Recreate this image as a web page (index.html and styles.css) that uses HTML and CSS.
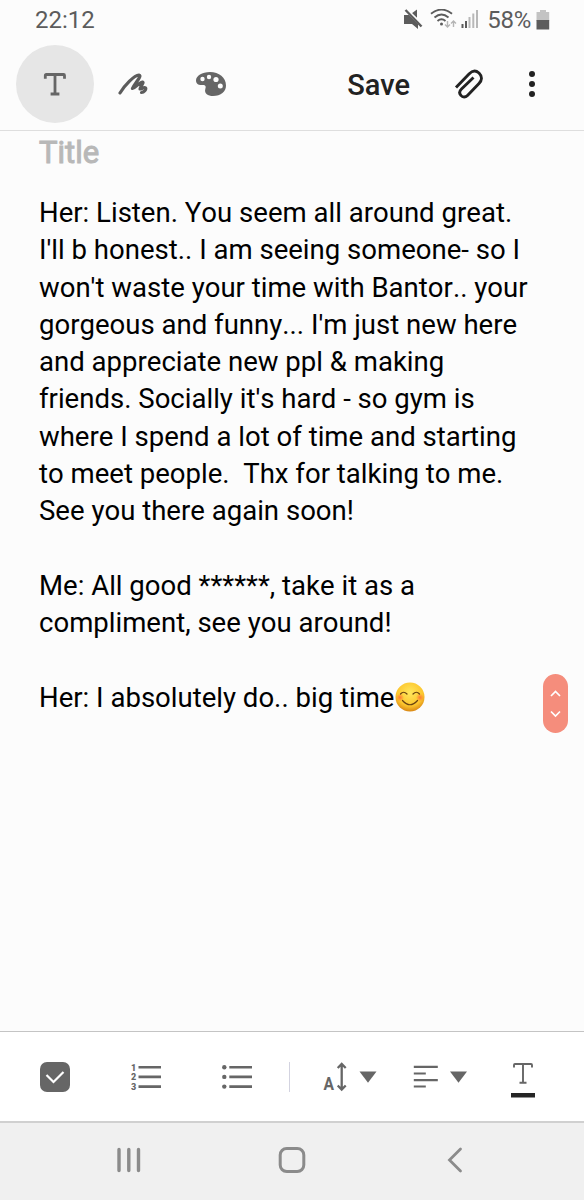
FILE: index.html
```html
<!DOCTYPE html>
<html lang="en">

<head>
 <meta charset="UTF-8">
 <meta name="viewport" content="width=device-width">
 <title>Note</title>
 <link rel="stylesheet" href="styles.css">
</head>

<body>

 <div class="status">
  <span class="clock">22:12</span>
  <svg class="signals" width="76" height="22" viewBox="0 0 76 22">
   <!-- Muted -->
   <path fill="#5c5c5c" d="M0 6h5l9 9v5l-6-5H0zM7.500 4.500L13 .500V9z"/>
   <path stroke="#fcfcfc" stroke-width="1.500" d="M3 0l16 16"/>
   <path stroke="#5c5c5c" stroke-width="2.400" d="M1.500 1L17.500 17.500"/>
   <!-- Wi-Fi -->
   <g fill="none" stroke="#5c5c5c" stroke-width="1.900">
    <path d="M27 4.700Q37.500 -3.500 48 4.700M30.500 8.500Q37.500 2.700 44.500 8.500M33.500 12Q37.500 8.700 41.500 12"/>
   </g>
   <circle cx="37.500" cy="15" r="1.500" fill="#5c5c5c"/>
   <path fill="none" stroke="#b5b5b5" stroke-width="1.400" d="M43.500 12v6M41 15.500l2.500 2.500 2.500-2.500M49.500 18v-6M47 14.500l2.500-2.500 2.500 2.500"/>
   <!-- Mobile signal -->
   <path stroke="#5c5c5c" stroke-width="2" d="M58.500 19v-4M62 19v-7"/>
   <path stroke="#b8b8b8" stroke-width="2" d="M65.500 19V8M69.300 19V4.500M73 19V1"/>
  </svg>
  <span class="percent">58%</span>
  <svg class="battery" width="14" height="20" viewBox="0 0 14 20">
   <path fill="#c3c3c3" d="M4 0h6v2h3.200v9H.500V2H4z"/>
   <path fill="#5c5c5c" d="M.500 10h12.700v9.500H.500z"/>
  </svg>
 </div>

 <header class="toolbar">
  <button class="tool active" type="button">
   <svg width="24" height="24" viewBox="0 0 24 24" fill="none" stroke="#666" stroke-width="2.800">
    <path d="M2.300 6.800V3.400q0-.900.900-.900h17.400q.900 0 .900.900v3.400M12 2.500v19M7.600 22h8.800"/>
   </svg>
  </button>
  <button class="tool" type="button">
   <svg width="30" height="24" viewBox="0 0 30 24" fill="none" stroke="#5c5c5c" stroke-width="3.200" stroke-linecap="round" stroke-linejoin="round">
    <path d="M2 21C7 13 16 3.500 21 3C24.500 3.500 17 11 14.500 16.500C16.500 17 20 11 24.500 10C26.500 10.500 22 15 22 17C24 17 26 14.500 27.500 16C28.500 17.500 26 20.500 23.500 20.500"/>
   </svg>
  </button>
  <button class="tool" type="button">
   <svg width="30" height="24" viewBox="0 0 30 24">
    <path fill="#666" d="M14 0C6 0 0 4 0 8.500C0 12 3 13.500 6.500 13C9 12.800 10.500 14 9.300 17C8 21.500 12 24 17 24C25 24 30 19.500 30 13.500C30 5.500 23 0 14 0z"/>
    <g fill="#fcfcfc">
     <circle cx="6.500" cy="7" r="2.200"/>
     <circle cx="13" cy="5" r="2.200"/>
     <circle cx="20" cy="7.500" r="2.600"/>
     <circle cx="24.300" cy="14" r="2.500"/>
    </g>
   </svg>
  </button>
  <button class="save" type="button">Save</button>
  <button class="attach" type="button">
   <svg width="30" height="30" viewBox="0 0 30 30" fill="none" stroke="#222" stroke-width="2.900">
    <path d="M2 18.500L15 5C18.500 1.300 22 1.300 25 4C28.500 7.500 28 11.500 25 14.500L13.500 26.500C11.500 28.500 8.500 28.500 7 26.500C5 24.500 5.500 22 7.500 20L19.500 8.500"/>
   </svg>
  </button>
  <button class="more" type="button">
   <svg width="8" height="28" viewBox="0 0 8 28" fill="#222">
    <circle cx="4" cy="4" r="3"/>
    <circle cx="4" cy="14" r="3"/>
    <circle cx="4" cy="24" r="3"/>
   </svg>
  </button>
 </header>

 <main class="note">
  <h1 class="title">Title</h1>
  <div class="text">
   <p>Her: Listen. You seem all around great.<br>
    I'll b honest.. I am seeing someone- so I<br>
    won't waste your time with Bantor.. your<br>
    gorgeous and funny... I'm just new here<br>
    and appreciate new ppl &amp; making<br>
    friends. Socially it's hard - so gym is<br>
    where I spend a lot of time and starting<br>
    to meet people.&nbsp; Thx for talking to me.<br>
    See you there again soon!</p>
   <p>Me: All good ******, take it as a<br>
    compliment, see you around!</p>
   <p>Her: I absolutely do.. big time<svg class="emoji" width="30" height="30" viewBox="0 0 30 30">
     <defs>
      <radialGradient id="face" cx=".5" cy=".35" r=".65">
       <stop offset="0" stop-color="#ffe75c"/>
       <stop offset=".7" stop-color="#fcc52d"/>
       <stop offset="1" stop-color="#d98714"/>
      </radialGradient>
      <radialGradient id="blush">
       <stop offset="0" stop-color="#ff6a35" stop-opacity=".85"/>
       <stop offset="1" stop-color="#ff6a35" stop-opacity="0"/>
      </radialGradient>
     </defs>
     <circle cx="15" cy="15" r="14.500" fill="url(#face)"/>
     <circle cx="5" cy="15.500" r="4" fill="url(#blush)"/>
     <circle cx="25" cy="15.500" r="4" fill="url(#blush)"/>
     <path fill="none" stroke="#6b4410" stroke-width="1.200" stroke-linecap="round" d="M5.500 12Q8.500 8.500 12 12M18 12Q21.500 8.500 24.500 12M7.500 18.500Q15 27 22.500 18.500"/>
    </svg></p>
  </div>
  <div class="scroller">
   <svg width="25" height="59" viewBox="0 0 25 59" fill="none" stroke="#fff" stroke-width="1.700">
    <path d="M8 22l4.500-4.500 4.500 4.500M8 37.500l4.500 4.500 4.500-4.500"/>
   </svg>
  </div>
 </main>

 <div class="format">
  <button class="check" type="button">
   <svg width="30" height="30" viewBox="0 0 30 30">
    <rect width="30" height="30" rx="7" fill="#666"/>
    <path fill="none" stroke="#fff" stroke-width="2.200" d="M6.500 13l7 7L23.500 10"/>
   </svg>
  </button>
  <button class="numbers" type="button">
   <svg width="30" height="28" viewBox="0 0 30 28">
    <g class="digits">
     <text x="0" y="7.500">1</text>
     <text x="0" y="17.200">2</text>
     <text x="0" y="27">3</text>
    </g>
    <path stroke="#666" stroke-width="2.600" d="M7.500 4.200H30M7.500 13.900H30M7.500 23.600H30"/>
   </svg>
  </button>
  <button class="bullets" type="button">
   <svg width="30" height="28" viewBox="0 0 30 28">
    <g fill="#666">
     <circle cx="2.300" cy="4.200" r="2.200"/>
     <circle cx="2.300" cy="13.900" r="2.200"/>
     <circle cx="2.300" cy="23.600" r="2.200"/>
    </g>
    <path stroke="#666" stroke-width="2.600" d="M7.300 4.200H30M7.300 13.900H30M7.300 23.600H30"/>
   </svg>
  </button>
  <span class="divider"></span>
  <button class="size" type="button">
   <svg width="54" height="40" viewBox="0 -6 54 40">
    <text class="letter" x=".5" y="26.500" textLength="10.500" lengthAdjust="spacingAndGlyphs">A</text>
    <path fill="none" stroke="#666" stroke-width="2.300" d="M18.700 1.500v25M14.700 5l4-4 4 4M14.700 22.500l4 4 4-4"/>
    <path fill="#666" d="M36.500 8.500h17L45 19.800z"/>
   </svg>
  </button>
  <button class="align" type="button">
   <svg width="54" height="28" viewBox="0 0 54 28">
    <path stroke="#666" stroke-width="2.200" d="M.800 3.800h24M.800 10.500h12M.800 17.200h24M.800 23.500h12"/>
    <path fill="#666" d="M37 8.500h17L45.500 19.800z"/>
   </svg>
  </button>
  <button class="color" type="button">
   <svg width="24" height="36" viewBox="0 0 24 36">
    <path fill="none" stroke="#666" stroke-width="1.900" d="M3 5.500V3q0-1 1-1h16q1 0 1 1V5.500M12 2v19M8.500 20.700h7"/>
    <path fill="#252525" d="M0 31h24v4.500H0z"/>
   </svg>
  </button>
 </div>

 <nav class="nav">
  <svg width="24" height="26" viewBox="0 0 24 26" stroke="#8b8b8b" stroke-width="3.400" stroke-linecap="round">
   <path d="M2 2.500v21M11.800 2.500v21M21.500 2.500v21"/>
  </svg>
  <svg width="28" height="28" viewBox="0 0 28 28" fill="none" stroke="#8b8b8b" stroke-width="3">
   <rect x="2.200" y="2.500" width="23.600" height="23" rx="6.500"/>
  </svg>
  <svg width="16" height="26" viewBox="0 0 16 26" fill="none" stroke="#8b8b8b" stroke-width="2.800" stroke-linecap="round">
   <path d="M13.500 2L2.500 13l11 11"/>
  </svg>
 </nav>

</body>
</html>
```
FILE: styles.css
```css
* {
  box-sizing: border-box;
}
body {
  margin: 0;
  height: 1200px;
  display: flex;
  flex-direction: column;
  background-color: #fcfcfc;
  font-family: Roboto, sans-serif;
  font-kerning: none;
  color: #000;
  overflow: hidden;
}
svg {
  display: block;
  flex: none;
}
button {
  display: flex;
  align-items: center;
  justify-content: center;
  padding: 0;
  border: none;
  background: none;
  font-family: inherit;
}
.status {
  height: 40px;
  padding: 0 33px 0 35px;
  display: flex;
  align-items: center;
  font-size: 24px;
  line-height: 40px;
  color: #5c5c5c;
}
.signals {
  margin: 0 7px 0 auto;
}
.percent {
  letter-spacing: -0.300px;
}
.battery {
  margin: 0 1px 1px 5px;
}
.toolbar {
  height: 91px;
  padding: 0 13px 2px 16px;
  display: flex;
  align-items: center;
  border-bottom: 1px solid #dedede;
}
.tool {
  width: 78px;
  height: 78px;
  border-radius: 50%;
}
.active {
  background-color: #e6e6e6;
}
.save {
  margin-left: auto;
  padding-top: 2px;
  font-size: 29px;
  font-weight: 500;
  color: #222;
}
.attach {
  width: 30px;
  margin-left: 44px;
}
.more {
  width: 78px;
  margin-left: 9px;
}
.note {
  flex: 1;
  position: relative;
  padding: 0 39px;
}
.title {
  margin: 0;
  font-size: 31px;
  font-weight: 400;
  line-height: 44px;
  color: #b8b8b8;
  -webkit-text-stroke: 1px #b8b8b8;
}
.text {
  padding-top: 19px;
  font-size: 27.550px;
  line-height: 37.300px;
  white-space: nowrap;
}
.text p {
  margin: 0 0 37.300px;
}
.emoji {
  display: inline-block;
  margin-left: 1px;
  vertical-align: -5px;
}
.scroller {
  position: absolute;
  right: 16px;
  top: 543px;
  border-radius: 13px;
  background-color: #f58d7c;
}
.format {
  height: 90px;
  padding-left: 40px;
  display: flex;
  align-items: center;
  background-color: #fff;
  border-top: 1px solid #c4c4c4;
}
.numbers {
  margin-left: 61px;
}
.bullets {
  margin-left: 61px;
}
.digits {
  font-size: 9px;
  font-weight: 900;
  fill: #666;
}
.divider {
  width: 1px;
  height: 30px;
  margin-left: 37px;
  background-color: #d3d3e0;
}
.size {
  margin-left: 33px;
}
.letter {
  font-size: 17.500px;
  font-weight: 700;
  fill: #666;
}
.align {
  margin-left: 36px;
}
.color {
  margin-left: 44px;
  padding-top: 7px;
}
.nav {
  height: 79px;
  padding: 0 121px 4px 117px;
  display: grid;
  grid-template-columns: 24px 28px 16px;
  column-gap: 137px;
  align-items: center;
  background-color: #f0f0f0;
  border-top: 2px solid #d0d0d0;
}
.nav svg:last-child {
  margin-left: 4px;
}
```
